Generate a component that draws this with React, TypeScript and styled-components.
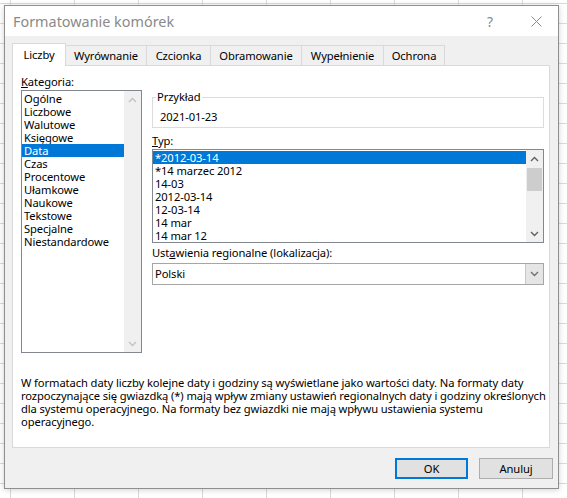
import React from 'react';
import styled, { createGlobalStyle } from 'styled-components';

const GlobalStyle = createGlobalStyle`
  html, body {
    margin: 0;
    padding: 0;
  }
  body {
    font-family: "Noto Sans", "Segoe UI", sans-serif;
    font-size: 11.2px;
    letter-spacing: -0.1px;
    color: #000;
  }
`;

const Sheet = styled.div`
  width: 567px;
  height: 498px;
  box-sizing: border-box;
  padding: 5px 0 0 4px;
  overflow: hidden;
  background-color: #fff;
  background-image: linear-gradient(to right, #dadada 1px, transparent 1px),
    linear-gradient(to bottom, #dadada 1px, transparent 1px);
  background-size: 64px 20px;
  background-position: 10px 3px;
`;

const Dialog = styled.div`
  width: 555px;
  height: 484px;
  box-sizing: border-box;
  border: 1px solid #8f8f8f;
  background: #f0f0f0;
  display: flex;
  flex-direction: column;
  box-shadow: 0 1px 6px rgba(0, 0, 0, 0.18);
`;

const TitleBar = styled.div`
  height: 30px;
  background: #fff;
  display: flex;
  align-items: center;
  padding: 0 16px 0 8px;
`;

const Title = styled.div`
  flex: 1;
  font-size: 14.4px;
  letter-spacing: 0;
  color: #8a8a8a;
`;

const HelpGlyph = styled.div`
  width: 14px;
  font-size: 14px;
  color: #8a8a8a;
  margin-right: 34px;
  text-align: center;
`;

const CloseButton = styled.div`
  width: 11px;
  height: 11px;
  display: flex;
`;

const Body = styled.div`
  flex: 1;
  display: flex;
  flex-direction: column;
  padding: 7px 0 0 7px;
`;

const TabRow = styled.div`
  display: flex;
  align-items: flex-end;
  height: 22px;
`;

const Tab = styled.div<{ $w: number; $active?: boolean; $first?: boolean }>`
  width: ${(p) => p.$w}px;
  height: ${(p) => (p.$active ? 23 : 20)}px;
  box-sizing: border-box;
  border: 1px solid #d9d9d9;
  border-bottom: none;
  border-left: ${(p) => (p.$first ? '1px solid #d9d9d9' : 'none')};
  background: ${(p) => (p.$active ? '#fff' : '#f0f0f0')};
  margin-bottom: ${(p) => (p.$active ? -1 : 0)}px;
  position: relative;
  z-index: ${(p) => (p.$active ? 1 : 0)};
  display: flex;
  align-items: center;
  justify-content: center;
  padding-bottom: ${(p) => (p.$active ? 1 : 0)}px;
  white-space: nowrap;
`;

const Panel = styled.div`
  width: 538px;
  height: 383px;
  box-sizing: border-box;
  border: 1px solid #d9d9d9;
  background: #fff;
  padding: 8px 0 0 8px;
  display: flex;
  flex-direction: column;
`;

const Columns = styled.div`
  display: flex;
  align-items: flex-start;
`;

const LeftColumn = styled.div`
  width: 121px;
  display: flex;
  flex-direction: column;
`;

const RightColumn = styled.div`
  width: 392px;
  margin-left: 10px;
  margin-top: 15px;
  display: flex;
  flex-direction: column;
`;

const Label = styled.div<{ $gap?: number }>`
  line-height: 16px;
  margin-top: ${(p) => p.$gap ?? 0}px;
  white-space: nowrap;
`;

const ListBox = styled.div<{ $h: number }>`
  height: ${(p) => p.$h}px;
  box-sizing: border-box;
  border: 1px solid #828790;
  display: flex;
`;

const ListItems = styled.div`
  flex: 1;
  padding-top: 1px;
  display: flex;
  flex-direction: column;
`;

const ListItem = styled.div<{ $selected?: boolean }>`
  height: 13px;
  line-height: 13px;
  padding-left: 2px;
  white-space: nowrap;
  background: ${(p) => (p.$selected ? '#0078d7' : 'transparent')};
  color: ${(p) => (p.$selected ? '#fff' : '#000')};
`;

const ScrollBar = styled.div`
  width: 17px;
  background: #f0f0f0;
  display: flex;
  flex-direction: column;
`;

const ScrollArrow = styled.div`
  height: 17px;
  display: flex;
  align-items: center;
  justify-content: center;
`;

const ScrollTrack = styled.div`
  flex: 1;
  display: flex;
  flex-direction: column;
`;

const ScrollThumb = styled.div`
  height: 23px;
  margin: 1px 1px 0;
  background: #cdcdcd;
`;

const Sample = styled.fieldset`
  margin: 0;
  padding: 0 3px 2px;
  border: 1px solid #dcdcdc;
  min-width: 0;
`;

const SampleLegend = styled.legend`
  padding: 0 1px;
  line-height: 16px;
`;

const SampleValue = styled.div`
  margin: 4px 0 0 4px;
  line-height: 16px;
`;

const Select = styled.div`
  height: 22px;
  margin-top: 2px;
  box-sizing: border-box;
  border: 1px solid #a6a6a6;
  display: flex;
  align-items: stretch;
`;

const SelectValue = styled.div`
  flex: 1;
  padding-left: 2px;
  line-height: 20px;
`;

const SelectButton = styled.div`
  width: 17px;
  background: #e5e5e5;
  border-left: 1px solid #c8c8c8;
  display: flex;
  align-items: center;
  justify-content: center;
`;

const Description = styled.div`
  margin-top: 23px;
  line-height: 13px;
  display: flex;
  flex-direction: column;
`;

const DescLine = styled.span`
  white-space: nowrap;
`;

const ButtonRow = styled.div`
  display: flex;
  justify-content: flex-end;
  gap: 11px;
  margin-top: 10px;
  padding-right: 5px;
`;

const Button = styled.div<{ $default?: boolean; $w: number }>`
  width: ${(p) => p.$w}px;
  height: 21px;
  box-sizing: border-box;
  background: #e1e1e1;
  border: ${(p) => (p.$default ? '2px solid #0078d7' : '1px solid #adadad')};
  display: flex;
  align-items: center;
  justify-content: center;
`;

const Chevron = ({ up, color }: { up?: boolean; color: string }) => (
  <svg width="9" height="6" viewBox="0 0 9 6">
    <path
      d={up ? 'M1 5 L4.5 1.5 L8 5' : 'M1 1 L4.5 4.5 L8 1'}
      fill="none"
      stroke={color}
      strokeWidth="1.4"
    />
  </svg>
);

const categories = [
  'Ogólne',
  'Liczbowe',
  'Walutowe',
  'Księgowe',
  'Data',
  'Czas',
  'Procentowe',
  'Ułamkowe',
  'Naukowe',
  'Tekstowe',
  'Specjalne',
  'Niestandardowe',
];

const types = [
  '*2012-03-14',
  '*14 marzec 2012',
  '14-03',
  '2012-03-14',
  '12-03-14',
  '14 mar',
  '14 mar 12',
];

const tabs: [string, number][] = [
  ['Liczby', 54],
  ['Wyrównanie', 81],
  ['Czcionka', 64],
  ['Obramowanie', 91],
  ['Wypełnienie', 82],
  ['Ochrona', 61],
];

export default function App() {
  return (
    <>
      <GlobalStyle />
      <Sheet>
        <Dialog>
          <TitleBar>
            <Title>Formatowanie komórek</Title>
            <HelpGlyph>?</HelpGlyph>
            <CloseButton>
              <svg width="11" height="11" viewBox="0 0 11 11">
                <path d="M0.5 0.5 L10.5 10.5 M10.5 0.5 L0.5 10.5" stroke="#8a8a8a" strokeWidth="1" />
              </svg>
            </CloseButton>
          </TitleBar>
          <Body>
            <TabRow>
              {tabs.map(([name, w], i) => (
                <Tab key={name} $w={w} $active={i === 0} $first={i === 0}>
                  {name}
                </Tab>
              ))}
            </TabRow>
            <Panel>
              <Columns>
                <LeftColumn>
                  <Label>
                    <u>K</u>ategoria:
                  </Label>
                  <ListBox $h={263}>
                    <ListItems>
                      {categories.map((c) => (
                        <ListItem key={c} $selected={c === 'Data'}>
                          {c}
                        </ListItem>
                      ))}
                    </ListItems>
                    <ScrollBar>
                      <ScrollArrow>
                        <Chevron up color="#c2c2c2" />
                      </ScrollArrow>
                      <ScrollTrack />
                      <ScrollArrow>
                        <Chevron color="#c2c2c2" />
                      </ScrollArrow>
                    </ScrollBar>
                  </ListBox>
                </LeftColumn>
                <RightColumn>
                  <Sample>
                    <SampleLegend>Przykład</SampleLegend>
                    <SampleValue>2021-01-23</SampleValue>
                  </Sample>
                  <Label $gap={5}>
                    <u>T</u>yp:
                  </Label>
                  <ListBox $h={94}>
                    <ListItems>
                      {types.map((t, i) => (
                        <ListItem key={t} $selected={i === 0}>
                          {t}
                        </ListItem>
                      ))}
                    </ListItems>
                    <ScrollBar>
                      <ScrollArrow>
                        <Chevron up color="#606060" />
                      </ScrollArrow>
                      <ScrollTrack>
                        <ScrollThumb />
                      </ScrollTrack>
                      <ScrollArrow>
                        <Chevron color="#606060" />
                      </ScrollArrow>
                    </ScrollBar>
                  </ListBox>
                  <Label $gap={2}>
                    Ust<u>a</u>wienia regionalne (lokalizacja):
                  </Label>
                  <Select>
                    <SelectValue>Polski</SelectValue>
                    <SelectButton>
                      <Chevron color="#707070" />
                    </SelectButton>
                  </Select>
                </RightColumn>
              </Columns>
              <Description>
                <DescLine>
                  W formatach daty liczby kolejne daty i godziny są wyświetlane jako wartości daty. Na formaty daty
                </DescLine>
                <DescLine>
                  rozpoczynające się gwiazdką (*) mają wpływ zmiany ustawień regionalnych daty i godziny określonych
                </DescLine>
                <DescLine>
                  dla systemu operacyjnego. Na formaty bez gwiazdki nie mają wpływu ustawienia systemu
                </DescLine>
                <DescLine>operacyjnego.</DescLine>
              </Description>
            </Panel>
            <ButtonRow>
              <Button $default $w={73}>
                OK
              </Button>
              <Button $w={74}>Anuluj</Button>
            </ButtonRow>
          </Body>
        </Dialog>
      </Sheet>
    </>
  );
}
